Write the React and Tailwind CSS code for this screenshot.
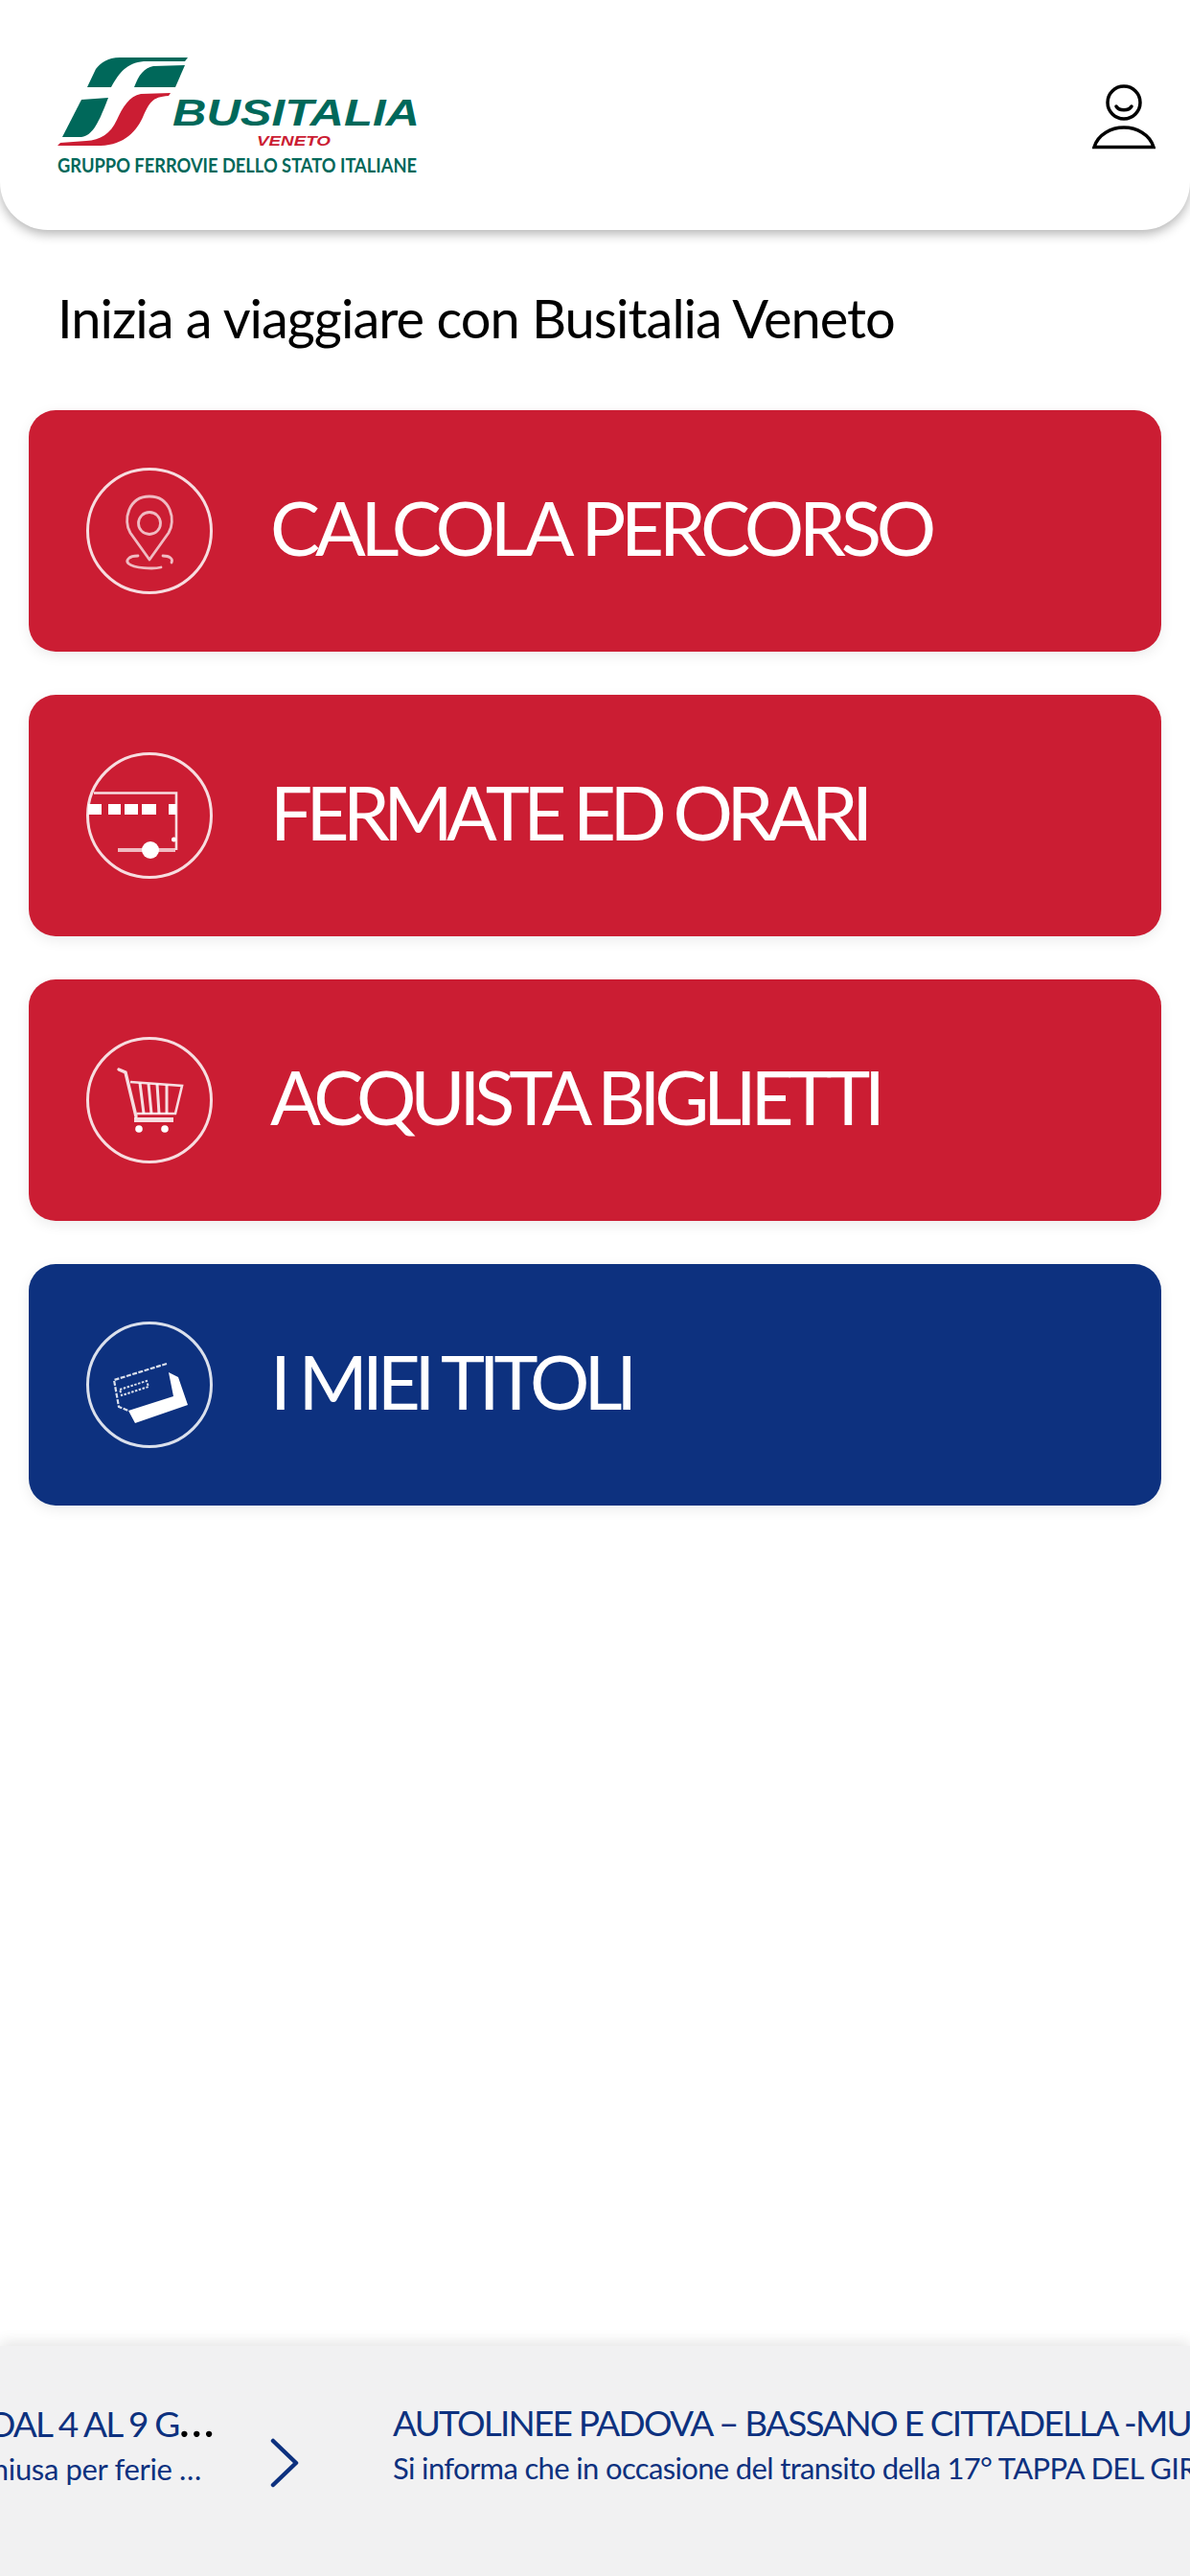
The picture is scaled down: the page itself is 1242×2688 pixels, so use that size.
const FONT = 'font-["Lato",sans-serif]'

function Logo() {
  return (
    <svg width="400" height="140" viewBox="0 0 400 140" className="block">
      <g transform="translate(-50 -55)">
        <path d="M196 60 L125 60 C112 60 105 66 100 72 L91 91 L116 91 C125 75 132 66 150 64 L193 64 Z" fill="#00685a" />
        <path d="M193 68 L160 69 C150 71 145 78 140 91 L183 91 Z" fill="#00685a" />
        <path d="M113 102 L85 104 L65 143 L85 143 C97 141 103 128 113 102 Z" fill="#00685a" />
        <path d="M178 97 L147 98 C135 100 128 112 122 125 C115 140 105 146 90 147 L63 149 L60 152 L105 152 C130 151 143 137 150 120 C156 108 158 101 176 100 Z" fill="#cb1d33" />
        <text x="180" y="131" textLength="258" lengthAdjust="spacingAndGlyphs" fill="#00685a" fontFamily="Liberation Sans" fontWeight="700" fontStyle="italic" fontSize="38">BUSITALIA</text>
        <text x="268" y="152" textLength="77" lengthAdjust="spacingAndGlyphs" fill="#cb1d33" fontFamily="Liberation Sans" fontWeight="700" fontStyle="italic" fontSize="15">VENETO</text>
        <text x="60" y="180" textLength="375" lengthAdjust="spacingAndGlyphs" fill="#00685a" fontFamily="Lato" fontWeight="700" fontSize="21">GRUPPO FERROVIE DELLO STATO ITALIANE</text>
      </g>
    </svg>
  )
}

function UserIcon() {
  return (
    <svg width="66" height="68" viewBox="0 0 66 68" fill="none" stroke="#000" className="block">
      <circle cx="33" cy="19" r="17" strokeWidth="3.5" />
      <path d="M25 23 C28 28 38 28 41 23" strokeWidth="3.5" strokeLinecap="round" />
      <path d="M2 65.5 C6 52 20 45 33 45 C46 45 60 52 64 65.5 Z" strokeWidth="3.5" />
    </svg>
  )
}

function Ring({ children }) {
  return (
    <svg width="132" height="132" viewBox="0 0 132 132" fill="none" stroke="#fff" strokeOpacity="0.85" className="block shrink-0">
      <circle cx="66" cy="66" r="64.5" strokeWidth="3" />
      {children}
    </svg>
  )
}

function PinIcon() {
  return (
    <Ring>
      <g strokeWidth="2.8" strokeOpacity="0.7">
        <path d="M66 96 L46 68 C38 55 44 30 66 30 C88 30 94 55 86 68 Z" strokeLinejoin="round" />
        <circle cx="66" cy="58" r="11.5" />
        <path d="M54 92 C44 92 41 97 44 100 C50 105 70 106 78 104 M80 92 C87 92 91 95 89 99" strokeLinecap="round" />
      </g>
    </Ring>
  )
}

function BusIcon() {
  return (
    <Ring>
      <path d="M8 42.5 H94 V102" strokeWidth="2.6" />
      <path d="M33 102 H93" strokeWidth="4" strokeOpacity="0.7" />
      <g fill="#fff" stroke="none">
        <rect x="2" y="54" width="14" height="11" />
        <rect x="23" y="54" width="13" height="11" />
        <rect x="40" y="54" width="14" height="11" />
        <rect x="58" y="54" width="15" height="11" />
        <rect x="86" y="54" width="8" height="11" />
        <circle cx="67" cy="102" r="9" />
        <circle cx="91.5" cy="91" r="2.5" />
      </g>
    </Ring>
  )
}

function CartIcon() {
  return (
    <Ring>
      <g strokeWidth="2.6">
        <path d="M34 34 L41 37 L52 83" strokeWidth="3.4" strokeLinecap="round" />
        <path d="M46 47 L100 51 L93 80 L53 80" />
        <path d="M56 48 L60 80 M65 49 L68 80 M74 49 L76 80 M84 50 L84 80" strokeWidth="3" />
      </g>
      <g fill="#fff" stroke="none">
        <rect x="50" y="84" width="41" height="5" opacity="0.85" />
        <circle cx="55" cy="96" r="3.8" />
        <circle cx="82" cy="96" r="3.8" />
      </g>
    </Ring>
  )
}

function TicketIcon() {
  return (
    <Ring>
      <path d="M84 44 L29 61 L34 89 L44 93" strokeWidth="2.2" strokeDasharray="5 1.5" />
      <path d="M35 71 L63 62 L65 68 L37 77 Z" strokeWidth="2" strokeDasharray="2.5 1.5" />
      <path d="M86 53 L96 58 L106 87 L51 106 L44 93 L91 78 Z" fill="#fff" stroke="none" />
    </Ring>
  )
}

function NextArrow() {
  return (
    <svg width="30" height="52" viewBox="0 0 30 52" fill="none" stroke="#0d317f" strokeWidth="4.5" strokeLinecap="round" strokeLinejoin="round" className="block shrink-0">
      <path d="M3 3 L27 26 L3 49" />
    </svg>
  )
}

const actions = [
  { label: 'CALCOLA PERCORSO', icon: <PinIcon />, color: 'bg-[#cb1d33]', tracking: 'tracking-[-5.2px]' },
  { label: 'FERMATE ED ORARI', icon: <BusIcon />, color: 'bg-[#cb1d33]', tracking: 'tracking-[-6.6px]' },
  { label: 'ACQUISTA BIGLIETTI', icon: <CartIcon />, color: 'bg-[#cb1d33]', tracking: 'tracking-[-6.2px]' },
  { label: 'I MIEI TITOLI', icon: <TicketIcon />, color: 'bg-[#0d317f]', tracking: 'tracking-[-6.1px]' },
]

export default function App() {
  return (
    <div className={`flex h-[2688px] w-[1242px] flex-col overflow-hidden bg-white ${FONT}`}>
      <header className="flex h-[240px] shrink-0 items-start justify-between rounded-b-[50px] bg-white pl-[60px] pr-[36px] pt-[60px] shadow-[0_4px_12px_rgba(0,0,0,0.3)]">
        <div className="-ml-[10px] -mt-[5px]">
          <Logo />
        </div>
        <div className="mt-[28px]">
          <UserIcon />
        </div>
      </header>

      <main className="flex-1 px-[30px]">
        <h1 className="mt-[62px] pl-[30px] text-[56px] leading-[60px] font-normal tracking-[-1px] text-black">
          Inizia a viaggiare con Busitalia Veneto
        </h1>
        <div className="mt-[66px] flex flex-col gap-[45px]">
          {actions.map((action) => (
            <a
              key={action.label}
              className={`flex h-[252px] items-center gap-[60px] rounded-[28px] pl-[60px] text-[78px] text-white shadow-[0_4px_14px_rgba(0,0,0,0.08)] ${action.color} ${action.tracking}`}
            >
              {action.icon}
              <span className="pb-[8px]">{action.label}</span>
            </a>
          ))}
        </div>
      </main>

      <footer className="flex h-[240px] shrink-0 items-start overflow-hidden bg-[#f1f1f2] pt-[56px] text-[#0d317f] shadow-[0_-4px_14px_rgba(0,0,0,0.1)]">
        <div className="flex w-[224px] shrink-0 flex-col items-end overflow-hidden whitespace-nowrap">
          <p className="text-[37px] leading-[48px] tracking-[-1.8px]">
            DAL 4 AL 9 G<span className="text-[50px] leading-[40px] tracking-normal text-black">…</span>
          </p>
          <p className="pr-[14px] text-[31px] leading-[46px] tracking-[-0.35px]">chiusa per ferie …</p>
        </div>
        <div className="mt-[40px] ml-[58px]">
          <NextArrow />
        </div>
        <div className="ml-[98px] flex flex-col whitespace-nowrap">
          <p className="text-[37px] leading-[48px] tracking-[-1.8px]">AUTOLINEE PADOVA – BASSANO E CITTADELLA -MURELLE</p>
          <p className="text-[31px] leading-[46px] tracking-[-0.65px]">Si informa che in occasione del transito della 17° TAPPA DEL GIRO</p>
        </div>
      </footer>
    </div>
  )
}
